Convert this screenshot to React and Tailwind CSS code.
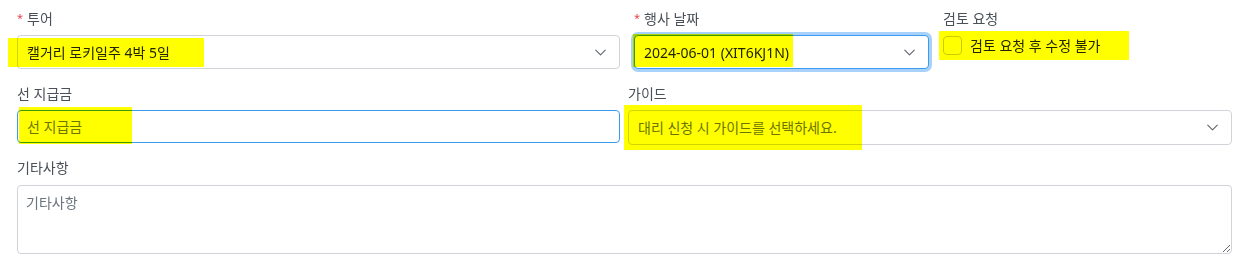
import { ChevronDown } from "lucide-react";

const FONT = "font-['Noto_Sans','Noto_Sans_CJK_KR',sans-serif]";

function Highlight({ className }) {
  return <span className={`pointer-events-none absolute bg-[#ffff00] mix-blend-multiply ${className}`} />;
}

function Label({ required, children }) {
  return (
    <div className="flex h-5 items-center text-[14px] text-[#495057]">
      {required ? <span className="mr-1 text-[11px] text-[#e5484d]">*</span> : null}
      {children}
    </div>
  );
}

function Select({ value, placeholder, focused, className = "", children }) {
  return (
    <div
      className={`relative flex items-center justify-between rounded-[4px] border bg-white pl-[9px] pr-[9px] text-[14px] ${
        focused ? "border-[#3b9bf0] ring-[3px] ring-[#a8d2fb]" : "border-[#d0d4d9]"
      } ${className}`}
    >
      <span className={value ? "text-[#212529]" : "text-[#6c757d]"}>{value || placeholder}</span>
      <ChevronDown className="h-[19px] w-[19px] text-[#5f666d]" strokeWidth={1.4} />
      {children}
    </div>
  );
}

export default function App() {
  return (
    <div className={`w-[1249px] bg-white px-[17px] pt-[8px] ${FONT}`}>
      <div className="flex">
        <div className="w-[603px]">
          <Label required>투어</Label>
          <Select value="캘거리 로키일주 4박 5일" className="mt-[7px] h-[34px]">
            <Highlight className="left-[-10px] top-[2px] h-[29px] w-[196px]" />
          </Select>
        </div>
        <div className="ml-[14px] w-[295px]">
          <Label required>행사 날짜</Label>
          <Select value="2024-06-01 (XIT6KJ1N)" focused className="mt-[7px] h-[34px]">
            <Highlight className="left-[-2px] top-[-2px] h-[33px] w-[160px]" />
          </Select>
        </div>
        <div className="ml-[14px] flex-1">
          <Label>검토 요청</Label>
          <label className="relative mt-[7px] flex h-[20px] items-center text-[14px] text-[#212529]">
            <Highlight className="left-[-4px] top-[-4px] h-[29px] w-[190px]" />
            <span className="h-[19px] w-[19px] rounded-[4px] border border-[#c9ccd0] bg-white" />
            <span className="ml-[8px]">검토 요청 후 수정 불가</span>
          </label>
        </div>
      </div>

      <div className="mt-[14px] flex">
        <div className="w-[603px]">
          <Label>선 지급금</Label>
          <div className="relative mt-[7px] flex h-[33px] items-center rounded-[4px] border border-[#3b9bf0] bg-white pl-[9px] text-[14px] text-[#6c757d]">
            선 지급금
            <Highlight className="left-[1px] top-[-4px] h-[37px] w-[113px]" />
          </div>
        </div>
        <div className="ml-[8px] flex-1">
          <Label>가이드</Label>
          <Select placeholder="대리 신청 시 가이드를 선택하세요." className="mt-[7px] h-[35px]">
            <Highlight className="left-[-5px] top-[-6px] h-[45px] w-[238px]" />
          </Select>
        </div>
      </div>

      <div className="mt-[12px]">
        <Label>기타사항</Label>
        <textarea
          readOnly
          placeholder="기타사항"
          className="mt-[8px] block h-[69px] w-full resize-y rounded-[4px] border border-[#d0d4d9] bg-white px-[8px] py-[6px] text-[14px] text-[#212529] outline-none placeholder:text-[#6c757d]"
        />
      </div>
      <div className="h-[14px]" />
    </div>
  );
}
